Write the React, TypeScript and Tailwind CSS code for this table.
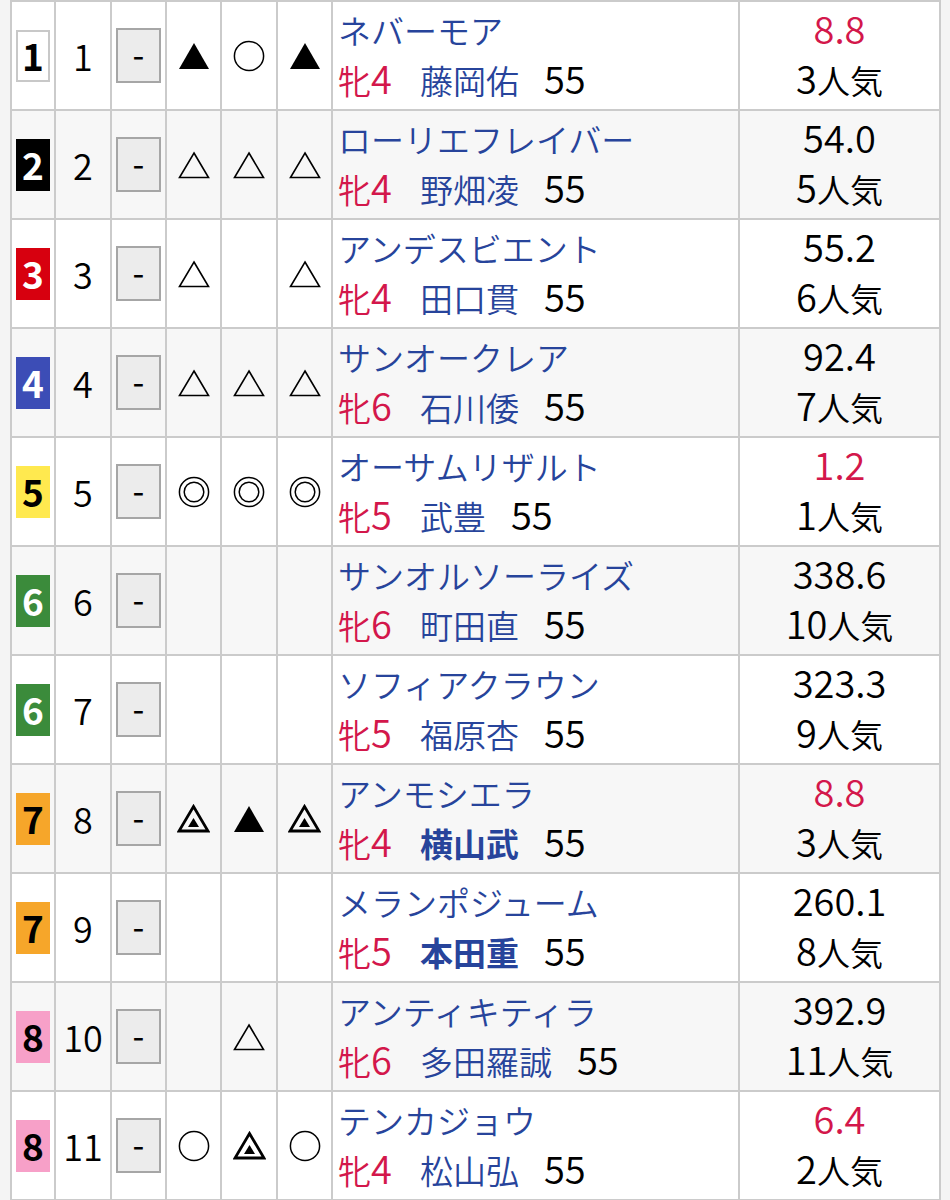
import React from "react";

type Mark = "" | "hon" | "tai" | "tan" | "ren" | "chu";

type Row = {
  gate: number;
  num: number;
  marks: Mark[];
  name: string;
  sex: string;
  jockey: string;
  bold?: boolean;
  weight: string;
  odds: string;
  hot?: boolean;
  pop: string;
};

const rows: Row[] = [
  { gate: 1, num: 1, marks: ["tan", "tai", "tan"], name: "ネバーモア", sex: "牝4", jockey: "藤岡佑", weight: "55", odds: "8.8", hot: true, pop: "3人気" },
  { gate: 2, num: 2, marks: ["ren", "ren", "ren"], name: "ローリエフレイバー", sex: "牝4", jockey: "野畑凌", weight: "55", odds: "54.0", pop: "5人気" },
  { gate: 3, num: 3, marks: ["ren", "", "ren"], name: "アンデスビエント", sex: "牝4", jockey: "田口貫", weight: "55", odds: "55.2", pop: "6人気" },
  { gate: 4, num: 4, marks: ["ren", "ren", "ren"], name: "サンオークレア", sex: "牝6", jockey: "石川倭", weight: "55", odds: "92.4", pop: "7人気" },
  { gate: 5, num: 5, marks: ["hon", "hon", "hon"], name: "オーサムリザルト", sex: "牝5", jockey: "武豊", weight: "55", odds: "1.2", hot: true, pop: "1人気" },
  { gate: 6, num: 6, marks: ["", "", ""], name: "サンオルソーライズ", sex: "牝6", jockey: "町田直", weight: "55", odds: "338.6", pop: "10人気" },
  { gate: 6, num: 7, marks: ["", "", ""], name: "ソフィアクラウン", sex: "牝5", jockey: "福原杏", weight: "55", odds: "323.3", pop: "9人気" },
  { gate: 7, num: 8, marks: ["chu", "tan", "chu"], name: "アンモシエラ", sex: "牝4", jockey: "横山武", bold: true, weight: "55", odds: "8.8", hot: true, pop: "3人気" },
  { gate: 7, num: 9, marks: ["", "", ""], name: "メランポジューム", sex: "牝5", jockey: "本田重", bold: true, weight: "55", odds: "260.1", pop: "8人気" },
  { gate: 8, num: 10, marks: ["", "ren", ""], name: "アンティキティラ", sex: "牝6", jockey: "多田羅誠", weight: "55", odds: "392.9", pop: "11人気" },
  { gate: 8, num: 11, marks: ["tai", "chu", "tai"], name: "テンカジョウ", sex: "牝4", jockey: "松山弘", weight: "55", odds: "6.4", hot: true, pop: "2人気" },
];

const gateStyle: Record<number, string> = {
  1: "bg-white text-black border-2 border-[#c8c8c8]",
  2: "bg-black text-white",
  3: "bg-[#d7000f] text-white",
  4: "bg-[#3c4db6] text-white",
  5: "bg-[#ffe94f] text-black",
  6: "bg-[#3b8b3b] text-white",
  7: "bg-[#f6a62a] text-black",
  8: "bg-[#f7a0c8] text-black",
};

function MarkIcon({ m }: { m: Mark }) {
  if (!m) return null;
  if (m === "tan")
    return (
      <svg width="32" height="28" viewBox="0 0 32 28">
        <polygon points="16,1 31,27 1,27" fill="#000" />
      </svg>
    );
  if (m === "ren")
    return (
      <svg width="32" height="28" viewBox="0 0 32 28">
        <polygon points="16,2 30.5,26.5 1.5,26.5" fill="none" stroke="#000" strokeWidth="1.6" />
      </svg>
    );
  if (m === "chu")
    return (
      <svg width="33" height="29" viewBox="0 0 33 29">
        <polygon points="16.5,2.5 31,27 2,27" fill="none" stroke="#000" strokeWidth="2.8" />
        <polygon points="16.5,14 22,23 11,23" fill="#000" />
      </svg>
    );
  if (m === "tai")
    return (
      <svg width="32" height="32" viewBox="0 0 32 32">
        <circle cx="16" cy="16" r="14.6" fill="none" stroke="#000" strokeWidth="1.5" />
      </svg>
    );
  if (m === "hon")
    return (
      <svg width="32" height="32" viewBox="0 0 32 32">
        <circle cx="16" cy="16" r="14.6" fill="none" stroke="#000" strokeWidth="1.5" />
        <circle cx="16" cy="16" r="9.8" fill="none" stroke="#000" strokeWidth="1.5" />
      </svg>
    );
  return null;
}

// renders text with digit runs in a larger size (reference digits are wide)
function Txt({ s }: { s: string }) {
  const parts = s.split(/([0-9.]+)/).filter((p) => p !== "");
  return (
    <>
      {parts.map((p, i) =>
        /^[0-9.]+$/.test(p) ? (
          <span key={i} className="text-[38px] leading-none">
            {p}
          </span>
        ) : (
          <span key={i}>{p}</span>
        )
      )}
    </>
  );
}

const font = { fontFamily: '"Noto Sans CJK JP", "Noto Sans", sans-serif' };

export default function App() {
  return (
    <div className="w-[950px] h-[1200px] bg-[#f4f4f4] overflow-hidden" style={font}>
      <div className="ml-[10px] w-[931px] grid grid-cols-[42px_54px_53px_53px_54px_53px_405px_199px] auto-rows-[107px] gap-[2px] p-[2px] bg-[#cbcbcb]">
        {rows.map((r, i) => {
          const bg = i % 2 === 0 ? "bg-white" : "bg-[#f7f7f7]";
          return (
            <React.Fragment key={i}>
              <div className={`${bg} flex items-center justify-center`}>
                <div
                  className={`${gateStyle[r.gate]} w-[34px] h-[52px] flex items-center justify-center text-[37px] font-bold leading-none`}
                >
                  {r.gate}
                </div>
              </div>
              <div className={`${bg} flex items-center justify-center text-[36px] text-black leading-none font-[350] pb-[2px]`}>
                {r.num}
              </div>
              <div className={`${bg} flex items-center justify-center`}>
                <div className="w-[45px] h-[55px] bg-[#ececec] border-2 border-[#a6a6a6] flex items-center justify-center text-[34px] text-black leading-none pb-[3px]">
                  -
                </div>
              </div>
              {r.marks.map((m, j) => (
                <div key={j} className={`${bg} flex items-center justify-center`}>
                  <MarkIcon m={m} />
                </div>
              ))}
              <div className={`${bg} pl-[5px] pt-[3px] text-[33px] leading-[50px] whitespace-nowrap font-[350]`}>
                <div className="text-[#27449b]">{r.name}</div>
                <div className="flex items-baseline">
                  <span className="text-[#d3174b] w-[82px]">
                    <Txt s={r.sex} />
                  </span>
                  <span className={`text-[#27449b] ${r.bold ? "font-bold" : ""}`}>{r.jockey}</span>
                  <span className="text-black ml-[25px]">
                    <Txt s={r.weight} />
                  </span>
                </div>
              </div>
              <div className={`${bg} pt-[3px] text-[33px] leading-[50px] text-center font-[350]`}>
                <div className={r.hot ? "text-[#d3174b]" : "text-black"}>
                  <Txt s={r.odds} />
                </div>
                <div className="text-black">
                  <Txt s={r.pop} />
                </div>
              </div>
            </React.Fragment>
          );
        })}
      </div>
    </div>
  );
}
